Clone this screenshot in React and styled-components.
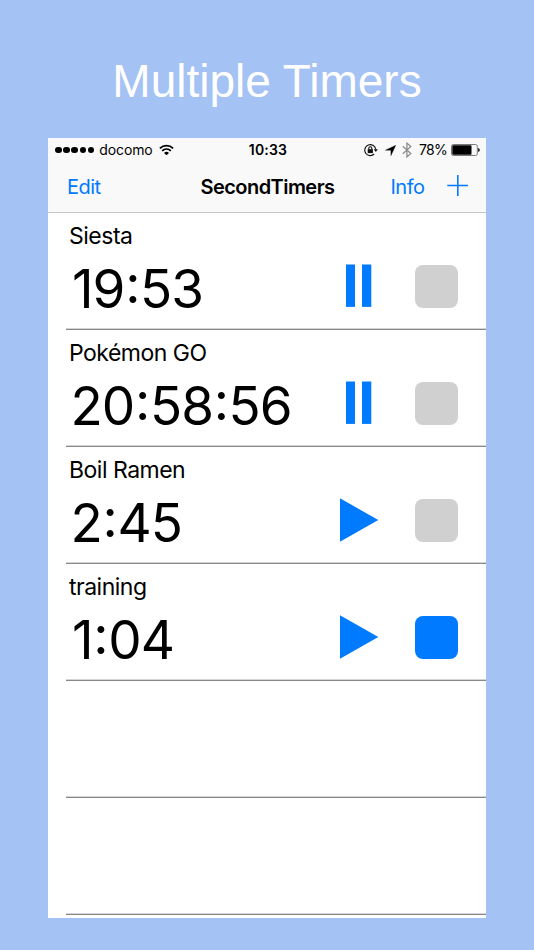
import styled, { createGlobalStyle } from "styled-components";

const timers = [
  { name: "Siesta", time: "19:53", running: true, indent: 3 },
  { name: "Pokémon GO", time: "20:58:56", running: true, indent: 1.5 },
  { name: "Boil Ramen", time: "2:45", indent: 1.5 },
  { name: "training", time: "1:04", canStop: true, indent: 3 },
  {},
  {},
];

const App = () => {
  return (
    <Page>
      <GlobalStyle />
      <Headline>Multiple Timers</Headline>
      <Phone>
        <StatusBar />
        <NavBar>
          <NavLink>Edit</NavLink>
          <NavTitle>SecondTimers</NavTitle>
          <NavActions>
            <NavLink>Info</NavLink>
            <AddIcon />
          </NavActions>
        </NavBar>
        <TimerList>
          {timers.map((timer, i) => (
            <TimerRow key={i}>{timer.name && <Timer {...timer} />}</TimerRow>
          ))}
        </TimerList>
      </Phone>
    </Page>
  );
};

const Timer = ({ name, time, running, canStop, indent }) => (
  <>
    <TimerName>{name}</TimerName>
    <TimerBody>
      <TimerTime $indent={indent}>
        {time.split(/(:)/).map((part, i) =>
          part === ":" ? <Colon key={i}>:</Colon> : part
        )}
      </TimerTime>
      <Toggle aria-label={running ? "Pause" : "Start"}>
        {running ? <PauseIcon /> : <PlayIcon />}
      </Toggle>
      <StopButton aria-label="Stop" $active={canStop} />
    </TimerBody>
  </>
);

const StatusBar = () => (
  <Status>
    <StatusSide>
      <Signal>
        <i />
        <i />
        <i />
        <i />
        <i />
      </Signal>
      <Carrier>docomo</Carrier>
      <WifiIcon />
    </StatusSide>
    <Clock>10:33</Clock>
    <StatusSide $end>
      <StatusIcons>
        <LockIcon />
        <LocationIcon />
        <BluetoothIcon />
      </StatusIcons>
      <Percent>78%</Percent>
      <BatteryIcon />
    </StatusSide>
  </Status>
);

// Icons
const WifiIcon = () => (
  <svg width="15" height="12" viewBox="0 0 15 12" fill="none" stroke="#000">
    <path d="M0.9 4.3a9.6 9.6 0 0 1 13.2 0" strokeWidth="1.8" />
    <path d="M3.1 6.8a6.3 6.3 0 0 1 8.8 0" strokeWidth="1.7" />
    <path d="M7.5 11.3L5 8.9a3.6 3.6 0 0 1 5 0z" fill="#000" stroke="none" />
  </svg>
);

const LockIcon = () => (
  <svg width="14" height="14" viewBox="0 0 14 14" fill="none" stroke="#111">
    <path d="M11.7 6.2A5.5 5.5 0 1 0 10.2 11" strokeWidth="1.1" />
    <path d="M9.7 6.3h4.2L11.8 9z" fill="#111" stroke="none" />
    <rect x="3.7" y="6.2" width="5.2" height="3.9" fill="#111" stroke="none" />
    <path d="M4.8 6.4V5.2a1.5 1.5 0 0 1 3 0v1.2" strokeWidth="1.1" />
  </svg>
);

const LocationIcon = () => (
  <svg width="11" height="11" viewBox="0 0 11 11">
    <path d="M10.8 0.2L5.9 10.8V5.2H0.3z" fill="#000" stroke="#000" strokeWidth="0.3" />
  </svg>
);

const BluetoothIcon = () => (
  <svg width="10" height="16" viewBox="0 0 10 16" fill="none" stroke="#8e8e8e">
    <path d="M0.8 4.2l8 7.4-3.9 3.3V1.1l3.9 3.3-8 7.4" strokeWidth="1.3" />
  </svg>
);

const BatteryIcon = () => (
  <svg width="29" height="12" viewBox="0 0 29 12">
    <rect x="0.5" y="0.5" width="25.8" height="11" rx="1.8" fill="none" stroke="#777" />
    <rect x="1.3" y="1.3" width="19.2" height="9.4" rx="0.8" fill="#000" />
    <path d="M27.2 3.9a2.2 2.2 0 0 1 0 4.2z" fill="#000" />
  </svg>
);

const AddIcon = () => (
  <svg width="21" height="21" viewBox="0 0 21 21" stroke="#007aff" strokeWidth="1.6">
    <path d="M10.8 0v21M0.3 10.5h20.7" />
  </svg>
);

const PauseIcon = () => (
  <svg width="40" height="44" viewBox="0 0 40 44" fill="#007aff">
    <rect x="6" y="0.5" width="9" height="42.4" />
    <rect x="22" y="0.5" width="9.3" height="42.4" />
  </svg>
);

const PlayIcon = () => (
  <svg width="40" height="44" viewBox="0 0 40 44" fill="#007aff">
    <path d="M0 0.3L38.3 22L0 43.7z" />
  </svg>
);

// Styled Components
const GlobalStyle = createGlobalStyle`
  * {
    box-sizing: border-box;
  }
  body {
    margin: 0;
    background: #a4c2f4;
  }
  svg {
    display: block;
    flex-shrink: 0;
  }
`;

const Page = styled.div`
  display: flex;
  flex-direction: column;
  align-items: center;
  height: 950px;
  background: #a4c2f4;
  font-family: "Inter", "Liberation Sans", sans-serif;
  color: #000;
`;

const Headline = styled.h1`
  margin: 0;
  padding-top: 55px;
  height: 138px;
  font: 400 46px/52px "Liberation Sans", Arial, sans-serif;
  color: white;
`;

const Phone = styled.main`
  display: flex;
  flex-direction: column;
  width: 438px;
  height: 780px;
  background: white;
  overflow: hidden;
`;

const Status = styled.div`
  display: grid;
  grid-template-columns: 1fr auto 1fr;
  align-items: center;
  height: 24px;
  padding: 0 6px 0 7px;
  background: #f9f9f9;
  font-size: 14px;
  line-height: 16px;
`;

const StatusSide = styled.div`
  display: flex;
  align-items: center;
  justify-content: ${({ $end }) => ($end ? "flex-end" : "flex-start")};
`;

const StatusIcons = styled.div`
  display: flex;
  align-items: center;
  gap: 6.5px;
`;

const Signal = styled.div`
  display: flex;
  gap: 1.7px;
  margin-right: 5px;

  i {
    width: 6.5px;
    height: 6.5px;
    border-radius: 50%;
    background: #000;
  }
`;

const Carrier = styled.span`
  margin-right: 6px;
  letter-spacing: -0.1px;
`;

const Clock = styled.span`
  padding-left: 1px;
  font-weight: 600;
  letter-spacing: 0.2px;
`;

const Percent = styled.span`
  margin: 0 4px 0 6.5px;
  letter-spacing: -0.7px;
`;

const NavBar = styled.nav`
  display: grid;
  grid-template-columns: 1fr auto 1fr;
  align-items: center;
  height: 51px;
  padding: 0 18px 0 19px;
  background: #f9f9f9;
  border-bottom: 1px solid #c6c6c8;
`;

const NavLink = styled.a`
  font-size: 20px;
  line-height: 24px;
  letter-spacing: -0.5px;
  color: #007aff;
`;

const NavTitle = styled.h2`
  margin: 0;
  font-size: 20px;
  line-height: 24px;
  font-weight: 600;
  letter-spacing: -0.55px;
`;

const NavActions = styled.div`
  display: flex;
  align-items: center;
  justify-content: flex-end;
  gap: 22.5px;

  svg {
    margin-bottom: 4px;
  }
`;

const TimerList = styled.ul`
  margin: 0;
  padding: 0 0 0 18px;
  list-style: none;
`;

const TimerRow = styled.li`
  height: 117px;
  padding: 9px 28px 0 3px;
  border-bottom: 1px solid #888;
  box-shadow: inset 0 -1px #d4d4d4;
`;

const TimerName = styled.div`
  font-size: 23px;
  line-height: 28px;
  letter-spacing: -0.5px;
`;

const TimerBody = styled.div`
  display: flex;
  height: 44px;
  margin-top: 14px;
`;

const TimerTime = styled.div`
  flex: 1;
  padding-left: ${({ $indent }) => $indent}px;
  font-size: 53px;
  line-height: 50px;
  letter-spacing: -1px;
`;

const Colon = styled.span`
  margin: 0 0.7px;
  line-height: 0;
  vertical-align: 5px;
`;

const Toggle = styled.button`
  width: 40px;
  height: 44px;
  margin-right: 35px;
  padding: 0;
  border: 0;
  background: none;
`;

const StopButton = styled.button`
  width: 43px;
  height: 43px;
  margin-top: 0.5px;
  padding: 0;
  border: 0;
  border-radius: 8px;
  background: ${({ $active }) => ($active ? "#007aff" : "#d0d0d0")};
`;

export default App;
